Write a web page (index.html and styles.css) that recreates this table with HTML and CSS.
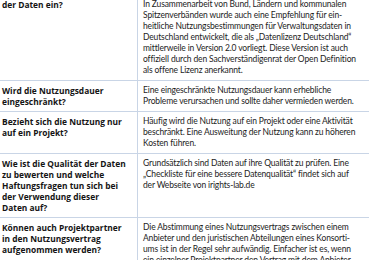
FILE: index.html
```html
<!DOCTYPE html>
<html lang="de"><head><meta charset="utf-8"><link rel="stylesheet" href="styles.css"></head>
<body>
<div class="scroll">
<table class="faq">
<tr>
<th>der Daten ein?</th>
<td>In Zusammenarbeit von Bund, Ländern und kommunalen<br>Spitzenverbänden wurde auch eine Empfehlung für ein-<br>heitliche Nutzungsbestimmungen für Verwaltungsdaten in<br>Deutschland entwickelt, die als „Datenlizenz Deutschland“<br>mittlerweile in Version 2.0 vorliegt. Diese Version ist auch<br>offiziell durch den Sachverständigenrat der Open Definition<br>als offene Lizenz anerkannt.</td>
</tr>
<tr>
<th>Wird die Nutzungsdauer<br>eingeschränkt?</th>
<td>Eine eingeschränkte Nutzungsdauer kann erhebliche<br>Probleme verursachen und sollte daher vermieden werden.</td>
</tr>
<tr>
<th>Bezieht sich die Nutzung nur<br>auf ein Projekt?</th>
<td>Häufig wird die Nutzung auf ein Projekt oder eine Aktivität<br>beschränkt. Eine Ausweitung der Nutzung kann zu höheren<br>Kosten führen.</td>
</tr>
<tr>
<th>Wie ist die Qualität der Daten<br>zu bewerten und welche<br>Haftungsfragen tun sich bei<br>der Verwendung dieser<br>Daten auf?</th>
<td>Grundsätzlich sind Daten auf ihre Qualität zu prüfen. Eine<br>„Checkliste für eine bessere Datenqualität“ findet sich auf<br>der Webseite von irights-lab.de</td>
</tr>
<tr>
<th>Können auch Projektpartner<br>in den Nutzungsvertrag<br>aufgenommen werden?</th>
<td>Die Abstimmung eines Nutzungsvertrags zwischen einem<br>Anbieter und den juristischen Abteilungen eines Konsorti-<br>ums ist in der Regel sehr aufwändig. Einfacher ist es, wenn<br>ein einzelner Projektpartner den Vertrag mit dem Anbieter</td>
</tr>
</table>
</div>
</body></html>
```
FILE: styles.css
```css
html, body {
  margin: 0;
  padding: 0;
  background: #ffffff;
  overflow: hidden;
}
.scroll {
  margin-top: -5px;
}
.faq {
  border-collapse: collapse;
  width: 369px;
  color: #1c1c1c;
}
.faq th,
.faq td {
  vertical-align: top;
  white-space: nowrap;
  line-height: 11px;
  padding: 4px 0 4px 0;
  border-bottom: 1px solid #c9d5e6;
  text-align: left;
}
.faq th {
  width: 135px;
  padding-left: 2px;
  border-right: 1px solid #c9d5e6;
  font-family: "Open Sans", sans-serif;
  font-weight: 700;
  font-size: 8.4px;
  color: #141414;
}
.faq td {
  padding-left: 5px;
  font-family: Lato, sans-serif;
  font-weight: 400;
  font-size: 8.5px;
  letter-spacing: -0.14px;
}
```
